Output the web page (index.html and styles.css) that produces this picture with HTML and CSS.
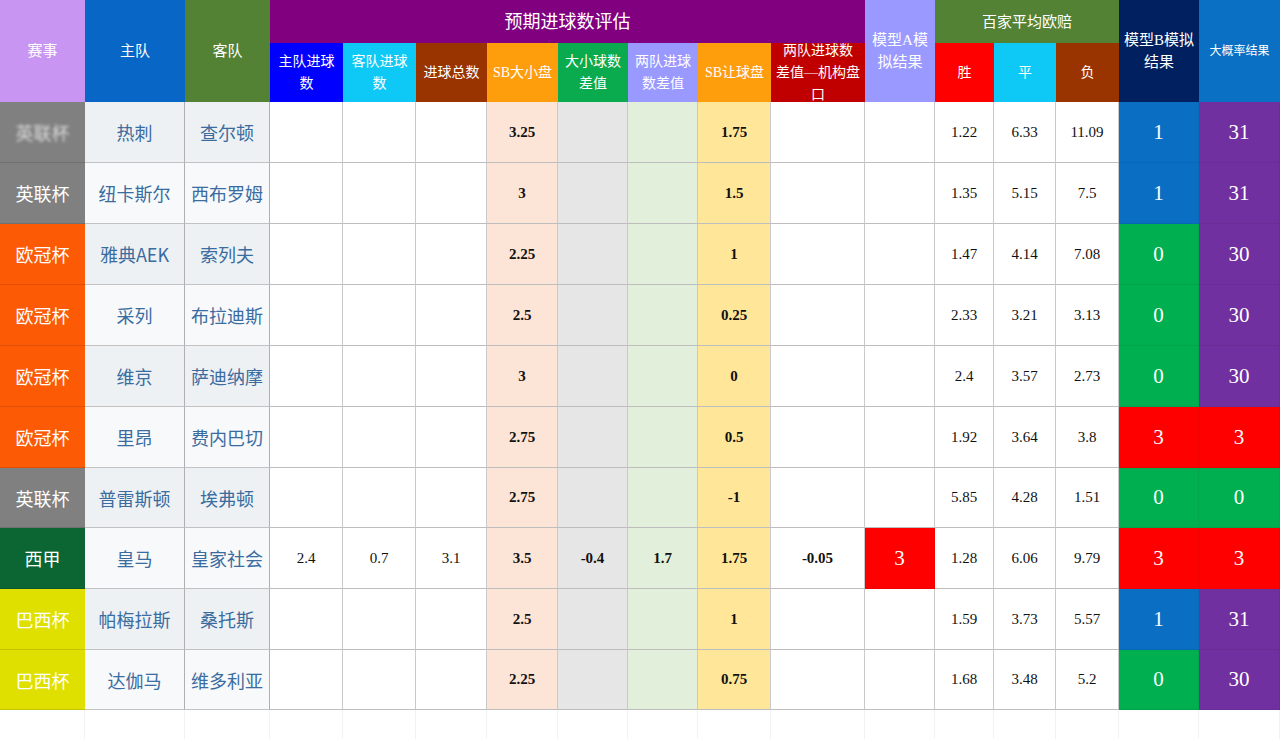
FILE: index.html
```html
<!DOCTYPE html>
<html lang="zh">
<head>
<meta charset="utf-8">
<title>预期进球数评估</title>
<link rel="stylesheet" href="styles.css">
</head>
<body>
<div class="sheet">
  <div class="h h-rs c-league">赛事</div>
  <div class="h h-rs c-home">主队</div>
  <div class="h h-rs c-away">客队</div>
  <div class="h h-group c-purple">预期进球数评估</div>
  <div class="h h-rs c-lav">模型A模<br>拟结果</div>
  <div class="h h-group3 c-green2">百家平均欧赔</div>
  <div class="h h-rs c-navy">模型B模拟<br>结果</div>
  <div class="h h-rs c-blue2 small">大概率结果</div>

  <div class="h c-blue">主队进球<br>数</div>
  <div class="h c-cyan">客队进球<br>数</div>
  <div class="h c-brown">进球总数</div>
  <div class="h c-orange">SB大小盘</div>
  <div class="h c-green">大小球数<br>差值</div>
  <div class="h c-lav">两队进球<br>数差值</div>
  <div class="h c-orange">SB让球盘</div>
  <div class="h c-darkred">两队进球数<br>差值—机构盘<br>口</div>
  <div class="h c-red">胜</div>
  <div class="h c-cyan">平</div>
  <div class="h c-brown">负</div>
</div>
<div class="sheet body" id="rows"></div>
<script src="app.js"></script>
</body>
</html>
```

FILE: app.js
```js
const rows = [
  ["英联杯","gray","热刺","查尔顿","","","","3.25","","","1.75","","","1.22","6.33","11.09",["1","b"],["31","p"],true],
  ["英联杯","gray","纽卡斯尔","西布罗姆","","","","3","","","1.5","","","1.35","5.15","7.5",["1","b"],["31","p"]],
  ["欧冠杯","orange","雅典AEK","索列夫","","","","2.25","","","1","","","1.47","4.14","7.08",["0","g"],["30","p"]],
  ["欧冠杯","orange","采列","布拉迪斯","","","","2.5","","","0.25","","","2.33","3.21","3.13",["0","g"],["30","p"]],
  ["欧冠杯","orange","维京","萨迪纳摩","","","","3","","","0","","","2.4","3.57","2.73",["0","g"],["30","p"]],
  ["欧冠杯","orange","里昂","费内巴切","","","","2.75","","","0.5","","","1.92","3.64","3.8",["3","r"],["3","r"]],
  ["英联杯","gray","普雷斯顿","埃弗顿","","","","2.75","","","-1","","","5.85","4.28","1.51",["0","g"],["0","g"]],
  ["西甲","dgreen","皇马","皇家社会","2.4","0.7","3.1","3.5","-0.4","1.7","1.75","-0.05","3","1.28","6.06","9.79",["3","r"],["3","r"]],
  ["巴西杯","yellow","帕梅拉斯","桑托斯","","","","2.5","","","1","","","1.59","3.73","5.57",["1","b"],["31","p"]],
  ["巴西杯","yellow","达伽马","维多利亚","","","","2.25","","","0.75","","","1.68","3.48","5.2",["0","g"],["30","p"]]
];
const root = document.getElementById("rows");
const bg = ["", "", "", "", "", "", "sbs", "dif", "gd", "sbh", "", "", "", "", ""];
rows.forEach((r, i) => {
  const row = document.createElement("div");
  row.className = "row" + (i === 6 || i === 9 ? " short" : "");
  const add = (cls, txt) => {
    const d = document.createElement("div");
    d.className = "cell " + cls;
    d.textContent = txt;
    row.appendChild(d);
    return d;
  };
  const lg = add("league lg-" + r[1], "");
  const s = document.createElement("span");
  s.textContent = r[0];
  if (r[18]) s.className = "smudge";
  lg.appendChild(s);
  const teamBg = i % 2 === 0 ? "team alt" : "team";
  add(teamBg, r[2]);
  add(teamBg, r[3]);
  for (let k = 4; k <= 11; k++) {
    const extra = bg[k - 1] ? " " + bg[k - 1] : "";
    const bold = k >= 7 ? " bold" : "";
    add("num" + extra + bold, r[k]);
  }
  add(r[12] ? "res res-r" : "num", r[12]);
  add("num", r[13]);
  add("num", r[14]);
  add("num", r[15]);
  add("res res-" + r[16][1], r[16][0]);
  add("res res-" + r[17][1], r[17][0]);
  root.appendChild(row);
});
const blank = document.createElement("div");
blank.className = "row blank";
for (let k = 0; k < 17; k++) {
  const d = document.createElement("div");
  d.className = "cell empty";
  blank.appendChild(d);
}
root.appendChild(blank);
```

FILE: styles.css
```css
* { box-sizing: border-box; }
html, body { margin: 0; padding: 0; background: #ffffff; }
body { width: 1280px; height: 739px; overflow: hidden; font-family: "Liberation Serif", "Noto Sans CJK SC", serif; }

.sheet {
  display: grid;
  grid-template-columns: 85px 100px 85px 73px 73px 71px 71px 70px 70px 73px 94px 70px 59px 62px 63px 80px 81px;
  width: 1280px;
}
.sheet:first-child { grid-template-rows: 43px 59px; }

.h {
  display: flex;
  align-items: center;
  justify-content: center;
  text-align: center;
  color: #ffffff;
  font-size: 14px;
  line-height: 22px;
  font-family: "Liberation Serif", "Noto Sans CJK SC", serif;
}
.h-rs { grid-row: span 2; font-size: 15px; }
.h-group { grid-column: span 8; font-size: 18px; }
.h-group3 { grid-column: span 3; font-size: 15px; }
.h.small { font-size: 12px; }

.c-league { background: #c896f2; }
.c-home { background: #0866c6; }
.c-away { background: #548235; }
.c-purple { background: #800080; }
.c-lav { background: #9999ff; }
.c-green2 { background: #548235; }
.c-navy { background: #002060; }
.c-blue2 { background: #0a70c4; }
.c-blue { background: #0000ff; }
.c-cyan { background: #0ec8f5; }
.c-brown { background: #993300; }
.c-orange { background: #ff9e0d; }
.c-green { background: #0aab4f; }
.c-darkred { background: #c00000; }
.c-red { background: #ff0000; }

.body { display: block; }
.row {
  display: grid;
  grid-template-columns: 85px 100px 85px 73px 73px 71px 71px 70px 70px 73px 94px 70px 59px 62px 63px 80px 81px;
  height: 61px;
}
.row.short { height: 60px; }
.row.blank { height: 29px; }

.cell {
  display: flex;
  align-items: center;
  justify-content: center;
  border-right: 1px solid #c9c9c9;
  border-bottom: 1px solid #bdbdbd;
  font-size: 15px;
  color: #111111;
  background: #ffffff;
}
.league {
  color: #ffffff;
  font-size: 18px;
  font-family: "Noto Sans CJK SC", sans-serif;
  font-weight: 400;
  border-right: none;
  border-bottom: 1px solid rgba(0, 0, 0, 0.12);
}
.lg-gray { background: #808080; }
.lg-orange { background: #fd5a06; }
.lg-dgreen { background: #0b6634; }
.lg-yellow { background: #e0e000; }
.smudge { color: rgba(255, 255, 255, 0.7); filter: blur(1.5px); }

.team {
  background: #f7f9fb;
  color: #3a6c9f;
  font-size: 18px;
  font-family: "Noto Sans CJK SC", sans-serif;
  font-weight: 400;
  border-right: 1px solid #b0b0b0;
  border-bottom: 1px solid #c2c2c2;
}
.team.alt { background: #edf1f4; }

.num { font-family: "Liberation Serif", serif; }
.bold { font-weight: 700; }
.sbs { background: #fce4d6; }
.dif { background: #e6e6e6; }
.gd { background: #e2efda; }
.sbh { background: #ffe699; }

.res {
  color: #ffffff;
  font-size: 21px;
  font-family: "Liberation Serif", serif;
  border-right: 1px solid rgba(0, 0, 0, 0.05);
  border-bottom: 1px solid rgba(0, 0, 0, 0.06);
}
.res-b { background: #0a6fc2; }
.res-g { background: #00b050; }
.res-r { background: #ff0000; }
.res-p { background: #7030a0; }

.empty { border-right: 1px solid #f2f2f2; border-bottom: none; }
```
